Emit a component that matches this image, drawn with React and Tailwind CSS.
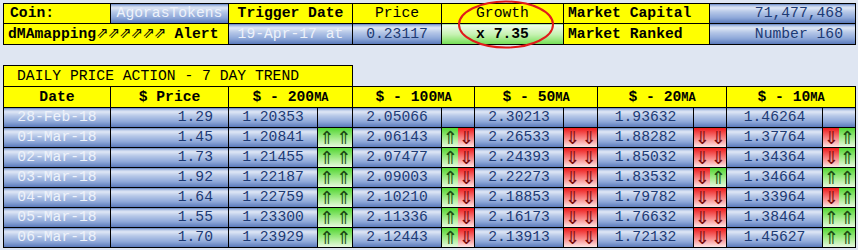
import React from 'react';

const blue = "bg-[linear-gradient(to_bottom,#8aa5d6_0%,#e2e9f6_16%,#b4c6e7_40%,#8ea8d9_70%,#5676b8_100%)]";
const yellow = "bg-[#ffff00]";
const cell = "border border-black p-0 align-middle";
const light = "text-[#eef2fa]";
const dark = "text-[#1d3a74]";

const rows = [
  ['28-Feb-18', '1.29', '1.20353', null, '2.05066', null, '2.30213', null, '1.93632', null, '1.46264', null],
  ['01-Mar-18', '1.45', '1.20841', 'uu', '2.06143', 'ud', '2.26533', 'dd', '1.88282', 'dd', '1.37764', 'du'],
  ['02-Mar-18', '1.73', '1.21455', 'uu', '2.07477', 'ud', '2.24393', 'dd', '1.85032', 'dd', '1.34364', 'du'],
  ['03-Mar-18', '1.92', '1.22187', 'uu', '2.09003', 'ud', '2.22273', 'dd', '1.83532', 'du', '1.34664', 'uu'],
  ['04-Mar-18', '1.64', '1.22759', 'uu', '2.10210', 'ud', '2.18853', 'dd', '1.79782', 'dd', '1.33964', 'du'],
  ['05-Mar-18', '1.55', '1.23300', 'uu', '2.11336', 'ud', '2.16173', 'dd', '1.76632', 'dd', '1.38464', 'uu'],
  ['06-Mar-18', '1.70', '1.23929', 'uu', '2.12443', 'ud', '2.13913', 'dd', '1.72132', 'dd', '1.45627', 'uu'],
];

function Half({ dir }) {
  if (dir === 'u') {
    return (
      <div className="flex-1 h-[19px] flex items-center justify-center bg-[linear-gradient(to_bottom,#52d632_0%,#a8ec90_55%,#e6f9de_100%)] text-[#1b4a12] font-['DejaVu_Sans',sans-serif] text-[18px] leading-none">
        ⇑
      </div>
    );
  }
  return (
    <div className="flex-1 h-[19px] flex items-center justify-center bg-[linear-gradient(to_bottom,#ee1a1a_0%,#f77e7e_50%,#ffe4e4_100%)] text-[#7a0c0c] font-['DejaVu_Sans',sans-serif] text-[18px] leading-none">
      ⇓
    </div>
  );
}

function Signal({ sig }) {
  if (!sig) return <td className={`${cell} ${blue}`}></td>;
  return (
    <td className={cell}>
      <div className="flex">
        <Half dir={sig[0]} />
        <Half dir={sig[1]} />
      </div>
    </td>
  );
}

function MA({ n }) {
  return (
    <>
      $ - {n}<span className="text-[12px]">MA</span>
    </>
  );
}

export default function App() {
  return (
    <div className="relative w-[858px] h-[250px] bg-[#dfe6f2] font-['Liberation_Mono',monospace] text-[14.7px] leading-none text-black overflow-hidden">
      <table className="mt-[3px] ml-[3px] border-collapse table-fixed w-[852px]">
        <colgroup>
          <col className="w-[107px]" />
          <col className="w-[118px]" />
          <col className="w-[124px]" />
          <col className="w-[89px]" />
          <col className="w-[122px]" />
          <col className="w-[146px]" />
          <col className="w-[146px]" />
        </colgroup>
        <tbody>
          <tr className="h-[20px]">
            <td className={`${cell} ${yellow} pl-[6px] font-bold`}>Coin:</td>
            <td className={`${cell} ${blue} text-center ${light}`}>AgorasTokens</td>
            <td className={`${cell} ${yellow} text-center font-bold`}>Trigger Date</td>
            <td className={`${cell} ${yellow} text-center`}>Price</td>
            <td className={`${cell} ${yellow} text-center`}>Growth</td>
            <td className={`${cell} ${yellow} pl-[4px] font-bold`}>Market Capital</td>
            <td className={`${cell} ${blue} text-right pr-[12px] ${dark}`}>71,477,468</td>
          </tr>
          <tr className="h-[21px]">
            <td colSpan={2} className={`${cell} ${yellow} pl-[4px] font-bold whitespace-nowrap`}>
              dMAmapping<span className="font-['DejaVu_Sans',sans-serif] text-[15px] font-normal tracking-[-1px]">⇗⇗⇗⇗⇗⇗</span> Alert
            </td>
            <td className={`${cell} ${blue} text-center ${light} whitespace-nowrap`}>19-Apr-17 at</td>
            <td className={`${cell} ${blue} text-center ${dark}`}>0.23117</td>
            <td className={`${cell} bg-[linear-gradient(to_bottom,#f2fdee_0%,#c6f2b2_50%,#72de52_100%)] text-center font-bold`}>x 7.35</td>
            <td className={`${cell} ${yellow} pl-[4px] font-bold`}>Market Ranked</td>
            <td className={`${cell} ${blue} text-right pr-[12px] ${dark}`}>Number 160</td>
          </tr>
        </tbody>
      </table>

      <table className="mt-[20px] ml-[3px] border-collapse table-fixed w-[852px]">
        <colgroup>
          <col className="w-[107px]" />
          <col className="w-[118px]" />
          <col className="w-[89px]" />
          <col className="w-[35px]" />
          <col className="w-[89px]" />
          <col className="w-[33px]" />
          <col className="w-[89px]" />
          <col className="w-[34px]" />
          <col className="w-[96px]" />
          <col className="w-[33px]" />
          <col className="w-[96px]" />
          <col className="w-[33px]" />
        </colgroup>
        <tbody>
          <tr className="h-[21px]">
            <td colSpan={4} className={`${cell} ${yellow} pl-[13px]`}>DAILY PRICE ACTION - 7 DAY TREND</td>
            <td colSpan={8} className="p-0"></td>
          </tr>
          <tr className="h-[21px]">
            <td className={`${cell} ${yellow} text-center font-bold`}>Date</td>
            <td className={`${cell} ${yellow} text-center font-bold`}>$ Price</td>
            <td colSpan={2} className={`${cell} ${yellow} text-center font-bold`}><MA n="200" /></td>
            <td colSpan={2} className={`${cell} ${yellow} text-center font-bold`}><MA n="100" /></td>
            <td colSpan={2} className={`${cell} ${yellow} text-center font-bold`}><MA n="50" /></td>
            <td colSpan={2} className={`${cell} ${yellow} text-center font-bold`}><MA n="20" /></td>
            <td colSpan={2} className={`${cell} ${yellow} text-center font-bold`}><MA n="10" /></td>
          </tr>
          {rows.map((r) => (
            <tr key={r[0]} className="h-[20px]">
              <td className={`${cell} ${blue} text-center ${light}`}>{r[0]}</td>
              <td className={`${cell} ${blue} text-right pr-[15px] ${dark}`}>{r[1]}</td>
              <td className={`${cell} ${blue} text-center ${dark}`}>{r[2]}</td>
              <Signal sig={r[3]} />
              <td className={`${cell} ${blue} text-center ${dark}`}>{r[4]}</td>
              <Signal sig={r[5]} />
              <td className={`${cell} ${blue} text-center ${dark}`}>{r[6]}</td>
              <Signal sig={r[7]} />
              <td className={`${cell} ${blue} text-center ${dark}`}>{r[8]}</td>
              <Signal sig={r[9]} />
              <td className={`${cell} ${blue} text-center ${dark}`}>{r[10]}</td>
              <Signal sig={r[11]} />
            </tr>
          ))}
        </tbody>
      </table>

      <svg className="absolute left-[456px] top-0" width="100" height="50" viewBox="0 0 100 50">
        <ellipse cx="50" cy="24.5" rx="47" ry="23" fill="none" stroke="#e01b1b" strokeWidth="2" />
      </svg>
    </div>
  );
}
